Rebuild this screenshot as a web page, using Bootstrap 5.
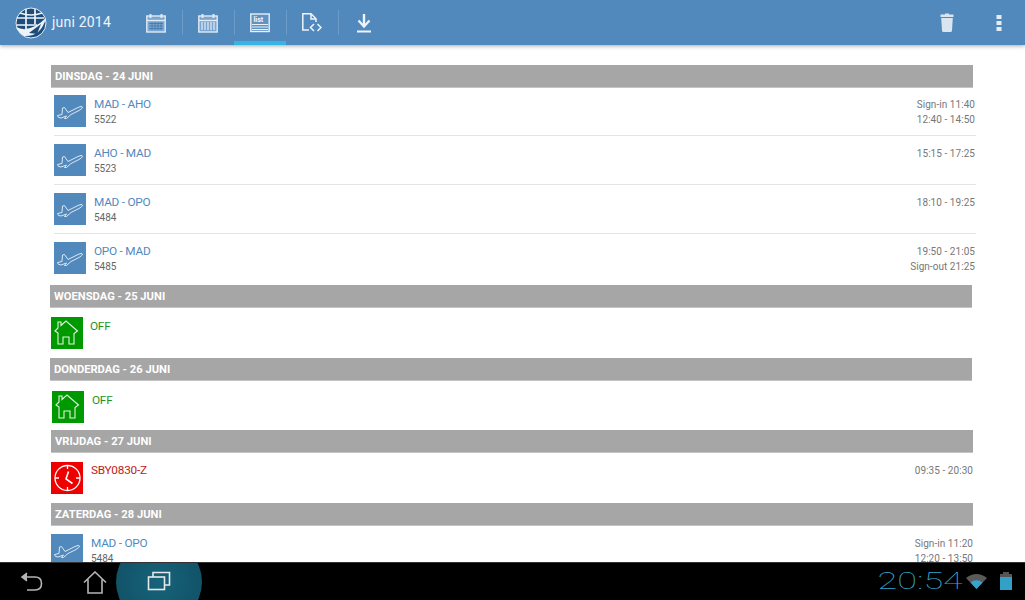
<!DOCTYPE html>
<html lang="en">
<head>
  <meta charset="UTF-8">
  <meta name="viewport" content="width=device-width, initial-scale=1.0">
  <title>Rooster</title>
  <link href="https://cdn.jsdelivr.net/npm/bootstrap@5.3.0/dist/css/bootstrap.min.css" rel="stylesheet">
  <style>
    html, body { height: 100%; overflow: hidden; }
    body { font-family: Roboto, "Liberation Sans", sans-serif; background: #fff; }
    .screen { width: 1025px; height: 600px; }
    .app-bar { height: 45px; background: #5289bd; box-shadow: 0 1px 4px rgba(0,0,0,.35); z-index: 2; flex: none; }
    .app-logo { width: 32px; margin-left: 15px; }
    .app-month { color: #eef4fa; font-size: 14px; margin-left: 5px; width: 78px; letter-spacing: .2px; }
    .bar-tab { width: 52px; height: 45px; border-bottom: 4px solid transparent; position: relative; }
    .bar-tab + .bar-tab::before { content: ""; position: absolute; left: 0; top: 10px; height: 25px; border-left: 1px solid #6b9bc8; }
    .bar-tab.is-on { border-bottom-color: #33b5e5; }
    .bar-tab svg { margin-top: 4px; }
    .bar-end { width: 52px; height: 45px; }
    .day-list { flex: 1 1 auto; overflow: hidden; padding-top: 20px; }
    .day-head { height: 23px; line-height: 24px; background: #a6a6a6; color: #fff; font-size: 11.2px; font-weight: 700; padding-left: 4px; width: 922px; margin-left: 51px; border-bottom: 1px solid #c4c4c4; }
    .day-head.wed, .day-head.thu { margin-left: 50px; }
    .duty-rows { margin-left: 54px; width: 922px; }
    .duty { height: 49px; padding-top: 8px; border-bottom: 1px solid #e4e4e4; }
    .duty:first-child { height: 48px; padding-top: 7px; }
    .duty:last-child { border-bottom: 0; height: 51px; }
    .duty-icon { width: 32px; height: 32px; flex: none; }
    .ic-blue { background: #5289bd; }
    .ic-green { background: #009a00; }
    .ic-red { background: #ee0000; }
    .duty-text { margin-left: 8px; }
    .duty-title { font-size: 11.8px; line-height: 14px; margin-top: 2px; color: #5289bd; letter-spacing: -.25px; }
    .duty-sub { font-size: 10px; line-height: 14px; color: #666; margin-top: 2px; }
    .duty-times { margin-left: auto; margin-right: 1px; text-align: right; font-size: 10px; line-height: 15px; color: #777; padding-top: 2px; letter-spacing: .05px; }
    .off-row { height: 50px; padding-top: 9px; margin-left: 51px; width: 922px; }
    .off-row .duty-times { margin-right: 0; }
    .off-row.wed .duty-text { margin-left: 7px; }
    .off-row.thu { margin-left: 52px; height: 49px; padding-top: 10px; }
    .off-row.sat { height: 40px; padding-top: 8px; }
    .off-row.fri .duty-title { margin-top: 1px; }
    .off-row.fri .duty-times { padding-top: 1px; }
    .txt-green { color: #1f941f; }
    .txt-red { color: #c22020; }
    .sys-bar { height: 38px; background: #000; flex: none; position: relative; overflow: hidden; border-top: 1px solid #333; }
    .sys-glow { position: absolute; left: 116px; top: -24px; width: 86px; height: 86px; border-radius: 50%; background: radial-gradient(circle, #16637a 0%, #125368 70%, #0c3a49 90%, #000 100%); }
    .sys-btn { position: absolute; top: 8px; }
    .sys-clock { position: absolute; right: 62px; top: 5px; color: #33a5cf; font-family: Roboto, sans-serif; font-size: 24px; line-height: 26px; font-weight: 100; transform: scaleX(1.5); transform-origin: right; }
  </style>
</head>
<body>
  <div class="screen d-flex flex-column">
    <div class="app-bar d-flex align-items-center">
      <svg class="app-logo" viewBox="0 0 32 32" height="32">
        <circle cx="16" cy="16" r="15" fill="#1d4c7c" stroke="#e8eef5" stroke-width="1"/>
        <path d="M2 11H29M2 18H22M11 2V22M20 2V17M5 6Q16 10 27 6" fill="none" stroke="#eef3f8" stroke-width="1.7"/>
        <path d="M1 20Q14 27 31 11Q26 30 9 29Q4 26 1 20Z" fill="#eef3f8"/>
        <path d="M14 26l12-9-4 10z" fill="#1d4c7c"/>
      </svg>
      <div class="app-month">juni 2014</div>
      <div class="bar-tab d-flex align-items-center justify-content-center">
        <svg width="20" height="20" viewBox="0 0 20 20" fill="none" stroke="#dfeaf5"><rect x=".8" y="3" width="18.4" height="16" fill="#7ba6cf" stroke-width="1.4"/><path d="M4.5 1v4M15.5 1v4" stroke-width="2"/><path d="M1 7.5H19" stroke-width="1.4"/><path d="M3 10.5H17M3 13H17M3 15.5H17M6 9V17M9 9V17M12 9V17M15 9V17" stroke-width=".8" stroke="#3f76ab"/></svg>
      </div>
      <div class="bar-tab d-flex align-items-center justify-content-center">
        <svg width="20" height="20" viewBox="0 0 20 20" fill="none" stroke="#dfeaf5"><rect x=".8" y="3" width="18.4" height="16" fill="#7ba6cf" stroke-width="1.4"/><path d="M4.5 1v4M15.5 1v4" stroke-width="2"/><path d="M1 7.5H19" stroke-width="1.4"/><path d="M4 9V17M7 9V17M10 9V17M13 9V17M16 9V17" stroke-width="1.2"/></svg>
      </div>
      <div class="bar-tab is-on d-flex align-items-center justify-content-center">
        <svg width="20" height="20" viewBox="0 0 20 20" fill="none" stroke="#e8f0f8"><rect x=".8" y="1" width="18.4" height="17.5" stroke-width="1.4" fill="#5f93c4"/><path d="M2 11.5H18M2 14H18M2 16.5H18" stroke-width="1"/><text x="3.5" y="8.5" font-size="7" font-weight="700" fill="#f2f6fb" stroke="none" font-family="Roboto, sans-serif">list</text></svg>
      </div>
      <div class="bar-tab d-flex align-items-center justify-content-center">
        <svg width="20" height="19" viewBox="0 0 20 19" fill="none" stroke="#eef4fa" stroke-width="1.5"><path d="M7 17H.8V.8H9L14 5.8V9M9 .8V6H14"/><path d="M12 11L8.5 14.5L12 18M15.5 11L19 14.5L15.5 18"/></svg>
      </div>
      <div class="bar-tab d-flex align-items-center justify-content-center">
        <svg width="14" height="20" viewBox="0 0 14 20" fill="none" stroke="#eef4fa"><path d="M7 1V13" stroke-width="2.4"/><path d="M1.5 7.5L7 13.5L12.5 7.5" stroke-width="2.2"/><path d="M0 18.5H14" stroke-width="2"/></svg>
      </div>
      <div class="bar-end ms-auto d-flex align-items-center justify-content-center">
        <svg width="14" height="19" viewBox="0 0 14 19" fill="#d9e6f2"><path d="M5 1.5V0.5H9V1.5H13.5V4H.5V1.5Z"/><path d="M1.2 5H12.8L12 17.5Q12 19 10.5 19H3.5Q2 19 2 17.5Z"/></svg>
      </div>
      <div class="bar-end d-flex align-items-center justify-content-center">
        <svg width="6" height="16" viewBox="0 0 6 16" fill="#e4edf6"><rect x=".5" y="0" width="5" height="4"/><rect x=".5" y="6" width="5" height="4"/><rect x=".5" y="12" width="5" height="4"/></svg>
      </div>
    </div>

    <div class="day-list">
      <div class="day-head">DINSDAG - 24 JUNI</div>
      <div class="duty-rows">
        <div class="duty d-flex" id="r1"></div>
        <div class="duty d-flex" id="r2"></div>
        <div class="duty d-flex" id="r3"></div>
        <div class="duty d-flex" id="r4"></div>
      </div>
      <div class="day-head wed">WOENSDAG - 25 JUNI</div>
      <div class="off-row wed d-flex">
        <div class="duty-icon ic-green" data-ic="home"></div>
        <div class="duty-text"><div class="duty-title txt-green">OFF</div></div>
      </div>
      <div class="day-head thu">DONDERDAG - 26 JUNI</div>
      <div class="off-row thu d-flex">
        <div class="duty-icon ic-green" data-ic="home"></div>
        <div class="duty-text"><div class="duty-title txt-green">OFF</div></div>
      </div>
      <div class="day-head">VRIJDAG - 27 JUNI</div>
      <div class="off-row fri d-flex">
        <div class="duty-icon ic-red" data-ic="clock"></div>
        <div class="duty-text"><div class="duty-title txt-red">SBY0830-Z</div></div>
        <div class="duty-times">09:35 - 20:30</div>
      </div>
      <div class="day-head">ZATERDAG - 28 JUNI</div>
      <div class="off-row sat d-flex" id="r5"></div>
    </div>

    <div class="sys-bar">
      <div class="sys-glow"></div>
      <svg class="sys-btn" style="left:20px" width="24" height="22" viewBox="0 0 24 22" fill="none" stroke="#b5b5b5" stroke-width="1.6"><path d="M2 6H15Q21.5 6 21.5 12.5T15 19H7"/><path d="M7 2L2 6L7 10" fill="#b5b5b5"/></svg>
      <svg class="sys-btn" style="left:83px" width="24" height="23" viewBox="0 0 24 23" fill="none" stroke="#b5b5b5" stroke-width="1.6"><path d="M1 11.5L12 1L23 11.5M5 8.5V22H19V8.5"/></svg>
      <svg class="sys-btn" style="left:147px" width="24" height="20" viewBox="0 0 24 20" fill="none" stroke="#e8e8e8" stroke-width="1.6"><rect x="1.5" y="6" width="16" height="12.5"/><path d="M6 6V1.5H22.5V14H17.5"/></svg>
      <div class="sys-clock">20:54</div>
      <svg class="sys-btn" style="left:966px;top:10px" width="21" height="16" viewBox="0 0 21 16"><path d="M0 5Q10.5 -3 21 5L10.5 16Z" fill="#5a5a5a"/><path d="M4.5 9.5Q10.5 5 16.500 9.5L10.5 16Z" fill="#33a5cf"/></svg>
      <svg class="sys-btn" style="left:1000px;top:9px" width="12" height="18" viewBox="0 0 12 18"><rect x="3" y="0" width="6" height="2" fill="#555"/><rect x="0" y="2" width="12" height="4" fill="#555"/><rect x="0" y="5" width="12" height="13" fill="#33a0c8"/></svg>
    </div>
  </div>

  <script src="https://cdn.jsdelivr.net/npm/bootstrap@5.3.0/dist/js/bootstrap.bundle.min.js"></script>
  <script>
    // icons are shared by the rows, so keep them in one place
    const icons = {
      plane: '<svg width="32" height="32" viewBox="0 0 32 32" fill="none" stroke="#dce8f3" stroke-width="1"><path d="M3.500 20.500L8 19.500L8.500 13L10.500 12.500L14 17.500L24 12.500Q28 10.500 28.500 12Q28.500 13.500 25 15.500L17 19.500L12.500 23.500L10.500 23.500L12.500 21L7 23Q3.500 23 3.500 20.500Z"/></svg>',
      home: '<svg width="32" height="32" viewBox="0 0 32 32" fill="none" stroke="#e0f5e0" stroke-width="1.1"><path d="M7 27V16L4 14L7 11V5H10V8.500L15 4L26.500 14L23 16.500V27H18V20H12V27Z"/></svg>',
      clock: '<svg width="32" height="32" viewBox="0 0 32 32" fill="none" stroke="#fff" stroke-width="1.3"><circle cx="16.500" cy="16" r="12.500"/><path d="M16.500 3V7M16.500 25V29M4 16H8M25 16H29"/><path d="M17.500 9.500L15 17L21.500 21.500" stroke-width="1.6"/></svg>'
    };

    const flights = [
      ['r1', 'MAD - AHO', '5522', ['Sign-in 11:40', '12:40 - 14:50']],
      ['r2', 'AHO - MAD', '5523', ['15:15 - 17:25']],
      ['r3', 'MAD - OPO', '5484', ['18:10 - 19:25']],
      ['r4', 'OPO - MAD', '5485', ['19:50 - 21:05', 'Sign-out 21:25']],
      ['r5', 'MAD - OPO', '5484', ['Sign-in 11:20', '12:20 - 13:50']]
    ];

    flights.forEach(([id, title, nr, times]) => {
      document.getElementById(id).innerHTML = `
        <div class="duty-icon ic-blue">${icons.plane}</div>
        <div class="duty-text">
          <div class="duty-title">${title}</div>
          <div class="duty-sub">${nr}</div>
        </div>
        <div class="duty-times">${times.join('<br>')}</div>`;
    });

    document.querySelectorAll('[data-ic]').forEach(el => {
      el.innerHTML = icons[el.dataset.ic];
    });
  </script>
</body>
</html>
